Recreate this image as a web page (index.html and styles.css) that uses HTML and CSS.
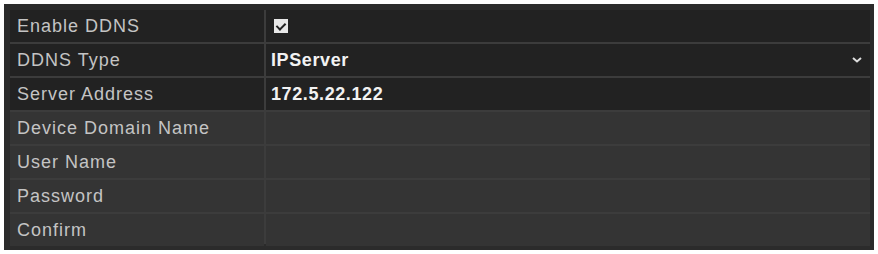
FILE: index.html
```html
<!DOCTYPE html>
<html>
<head>
  <title>DDNS</title>
  <link rel="stylesheet" href="styles.css">
</head>
<body>

<div class="panel">
  <div class="row dark">
    <div class="label">Enable DDNS</div>
    <div class="value"><span class="check"></span></div>
  </div>
  <div class="row dark">
    <div class="label">DDNS Type</div>
    <div class="value select">IPServer
      <svg class="arrow" width="10" height="6" viewBox="0 0 10 6"><path d="M1 1 L5 4.5 L9 1" fill="none" stroke="#ddd" stroke-width="2"/></svg>
    </div>
  </div>
  <div class="row dark">
    <div class="label">Server Address</div>
    <div class="value">172.5.22.122</div>
  </div>
  <div class="row">
    <div class="label">Device Domain Name</div>
    <div class="value"></div>
  </div>
  <div class="row">
    <div class="label">User Name</div>
    <div class="value"></div>
  </div>
  <div class="row">
    <div class="label">Password</div>
    <div class="value"></div>
  </div>
  <div class="row">
    <div class="label">Confirm</div>
    <div class="value"></div>
  </div>
</div>

</body>
</html>
```
FILE: styles.css
```css
body {
  margin: 0;
  background-color: #fff;
  font-family: "Liberation Sans", Arial, sans-serif;
}

.panel {
  margin: 4px 0 0 4px;
  width: 870px;
  height: 246px;
  box-sizing: border-box;
  padding: 6px 4px 4px 6px;
  background-color: #2b2b2b;
  display: flex;
  flex-direction: column;
  gap: 2px;
  background-image: linear-gradient(#3c3c3c, #3c3c3c);
  background-size: 860px 234px;
  background-position: 6px 6px;
  background-repeat: no-repeat;
}

.row {
  display: flex;
  height: 32px;
  gap: 2px;
}

.label,
.value {
  display: flex;
  align-items: center;
  background-color: #343434;
}

.label {
  width: 254px;
  box-sizing: border-box;
  padding-left: 7px;
  font-size: 18px;
  letter-spacing: 1px;
  color: #c4c4c4;
}

.value {
  flex: 1;
  padding-left: 5px;
  font-size: 18px;
  font-weight: bold;
  letter-spacing: 0.6px;
  color: #f2f2f2;
}

.row.dark .label,
.row.dark .value {
  background-color: #222;
}

.select {
  justify-content: space-between;
  padding-right: 8px;
}

.check {
  display: inline-block;
  width: 14px;
  height: 14px;
  margin-left: 3px;
  background-color: #e8e8e8;
  position: relative;
}

.check:after {
  content: "";
  position: absolute;
  left: 4px;
  top: 2px;
  width: 4px;
  height: 7px;
  border: solid #222;
  border-width: 0 2px 2px 0;
  transform: rotate(45deg);
}
```
